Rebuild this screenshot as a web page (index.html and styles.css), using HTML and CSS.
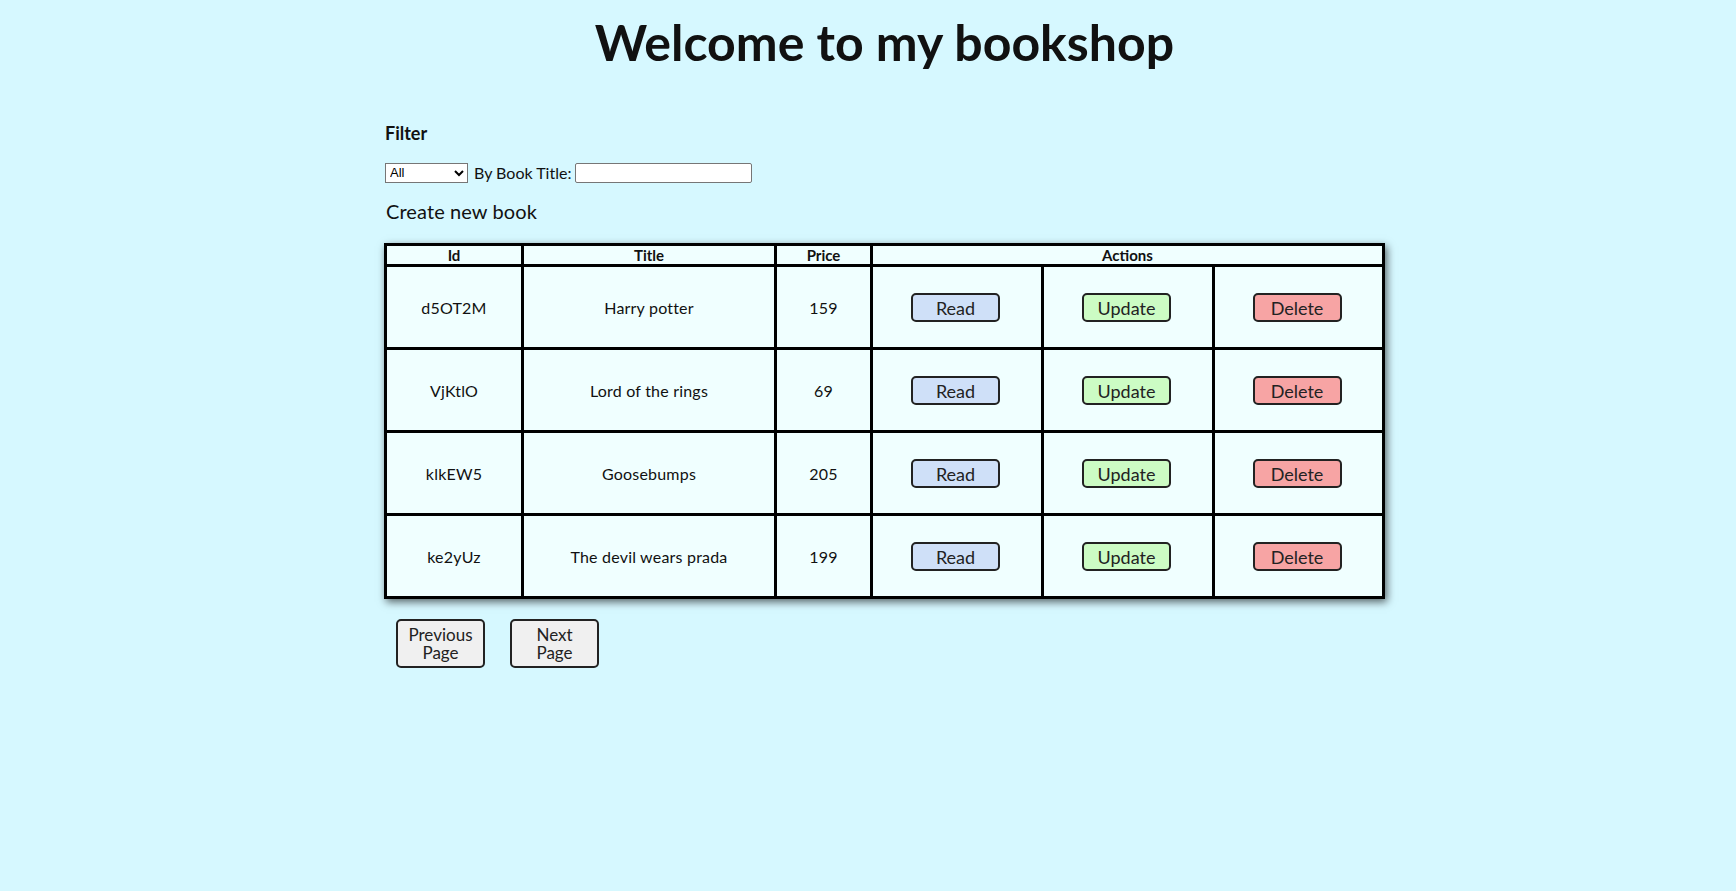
FILE: index.html
```html
<!DOCTYPE html>
<html lang="en">
<head>
<meta charset="utf-8">
<title>Bookshop</title>
<link rel="stylesheet" href="styles.css">
</head>
<body>
<div class="page">
  <h1 class="title">Welcome to my bookshop</h1>
  <h4 class="filter-title">Filter</h4>
  <div class="filter-row">
    <select class="filter-select">
      <option>All</option>
      <option>Title</option>
      <option>Price</option>
    </select>
    <span class="filter-label">By Book Title:</span>
    <input class="filter-input" type="text">
  </div>
  <div class="create">Create new book</div>
  <table class="books">
    <colgroup>
      <col class="c-id"><col class="c-title"><col class="c-price"><col class="c-act"><col class="c-act2"><col class="c-act3">
    </colgroup>
    <thead>
      <tr><th>Id</th><th>Title</th><th>Price</th><th colspan="3">Actions</th></tr>
    </thead>
    <tbody>
      <tr>
        <td><div class="cell">d5OT2M</div></td>
        <td><div class="cell">Harry potter</div></td>
        <td><div class="cell">159</div></td>
        <td><div class="cell"><button class="btn read">Read</button></div></td>
        <td><div class="cell"><button class="btn update">Update</button></div></td>
        <td><div class="cell"><button class="btn delete">Delete</button></div></td>
      </tr>
      <tr>
        <td><div class="cell">VjKtlO</div></td>
        <td><div class="cell">Lord of the rings</div></td>
        <td><div class="cell">69</div></td>
        <td><div class="cell"><button class="btn read">Read</button></div></td>
        <td><div class="cell"><button class="btn update">Update</button></div></td>
        <td><div class="cell"><button class="btn delete">Delete</button></div></td>
      </tr>
      <tr>
        <td><div class="cell">klkEW5</div></td>
        <td><div class="cell">Goosebumps</div></td>
        <td><div class="cell">205</div></td>
        <td><div class="cell"><button class="btn read">Read</button></div></td>
        <td><div class="cell"><button class="btn update">Update</button></div></td>
        <td><div class="cell"><button class="btn delete">Delete</button></div></td>
      </tr>
      <tr>
        <td><div class="cell">ke2yUz</div></td>
        <td><div class="cell">The devil wears prada</div></td>
        <td><div class="cell">199</div></td>
        <td><div class="cell"><button class="btn read">Read</button></div></td>
        <td><div class="cell"><button class="btn update">Update</button></div></td>
        <td><div class="cell"><button class="btn delete">Delete</button></div></td>
      </tr>
    </tbody>
  </table>
  <div class="pager">
    <button class="page-btn">Previous Page</button>
    <button class="page-btn">Next Page</button>
  </div>
</div>
</body>
</html>
```

FILE: styles.css
```css
html, body {
  margin: 0;
  padding: 0;
}

body {
  background: #d6f8ff;
  color: #111;
  font-family: Lato, "Open Sans", sans-serif;
  font-size: 16px;
  min-height: 891px;
}

.page {
  width: 1001px;
  margin-left: 384px;
  padding-top: 12px;
}

.title {
  margin: 0;
  text-align: center;
  font-size: 50px;
  line-height: 60px;
  font-weight: 700;
}

.filter-title {
  margin: 51px 0 0 1px;
  font-size: 18px;
  line-height: 20px;
  font-weight: 700;
}

.filter-row {
  display: flex;
  align-items: center;
  margin-top: 19px;
  margin-left: 1px;
  height: 21px;
}

.filter-select {
  width: 83px;
  height: 20px;
  font-family: Arial, "Liberation Sans", sans-serif;
  font-size: 13px;
  margin: 0;
  padding: 0;
  border: 1px solid #767676;
  border-radius: 0;
  background: #fff;
}

.filter-label {
  margin: 0 4px 0 6px;
  font-size: 16px;
}

.filter-input {
  width: 177px;
  height: 20px;
  box-sizing: border-box;
  margin: 0;
  border: 1px solid #767676;
  border-radius: 2px;
  background: #fff;
  padding: 1px 2px;
}

.create {
  margin-top: 16px;
  margin-left: 2px;
  font-size: 20px;
  line-height: 24px;
  letter-spacing: 0.1px;
  color: #111;
}

.books {
  margin-top: 20px;
  width: 1001px;
  table-layout: fixed;
  border-collapse: separate;
  border-spacing: 0;
  border: 3px solid #000;
  background: #f0ffff;
  box-shadow: 2px 3px 8px rgba(0, 0, 0, 0.6);
}

.c-id { width: 137px; }
.c-title { width: 253px; }
.c-price { width: 96px; }
.c-act { width: 171px; }
.c-act2 { width: 171px; }
.c-act3 { width: 167px; }

.books th,
.books td {
  padding: 0;
  border-right: 3px solid #000;
  border-bottom: 3px solid #000;
  text-align: center;
}

.books th:last-child,
.books td:last-child {
  border-right: 0;
}

.books tbody tr:last-child td {
  border-bottom: 0;
}

.books th {
  font-size: 15px;
  line-height: 18px;
  font-weight: 700;
}

.cell {
  height: 80px;
  display: flex;
  align-items: center;
  justify-content: center;
  font-size: 16px;
  letter-spacing: 0.2px;
}

.btn {
  width: 89px;
  height: 29px;
  box-sizing: border-box;
  border: 2px solid #222;
  border-radius: 5px;
  font-family: Lato, "Open Sans", sans-serif;
  font-size: 18px;
  line-height: 22px;
  color: #222;
  padding: 0;
  margin-left: -3px;
  margin-top: 1px;
}

.read { background: #cfe0f8; }
.update { background: #ccfcc4; }
.delete { background: #f7a4a4; }

.pager {
  display: flex;
  gap: 25px;
  margin-top: 20px;
  margin-left: 12px;
}

.page-btn {
  width: 89px;
  height: 49px;
  box-sizing: border-box;
  border: 2px solid #222;
  border-radius: 5px;
  background: #f0f0f0;
  font-family: Lato, "Open Sans", sans-serif;
  font-size: 17px;
  line-height: 18px;
  color: #222;
  padding: 3px 8px;
}
```
